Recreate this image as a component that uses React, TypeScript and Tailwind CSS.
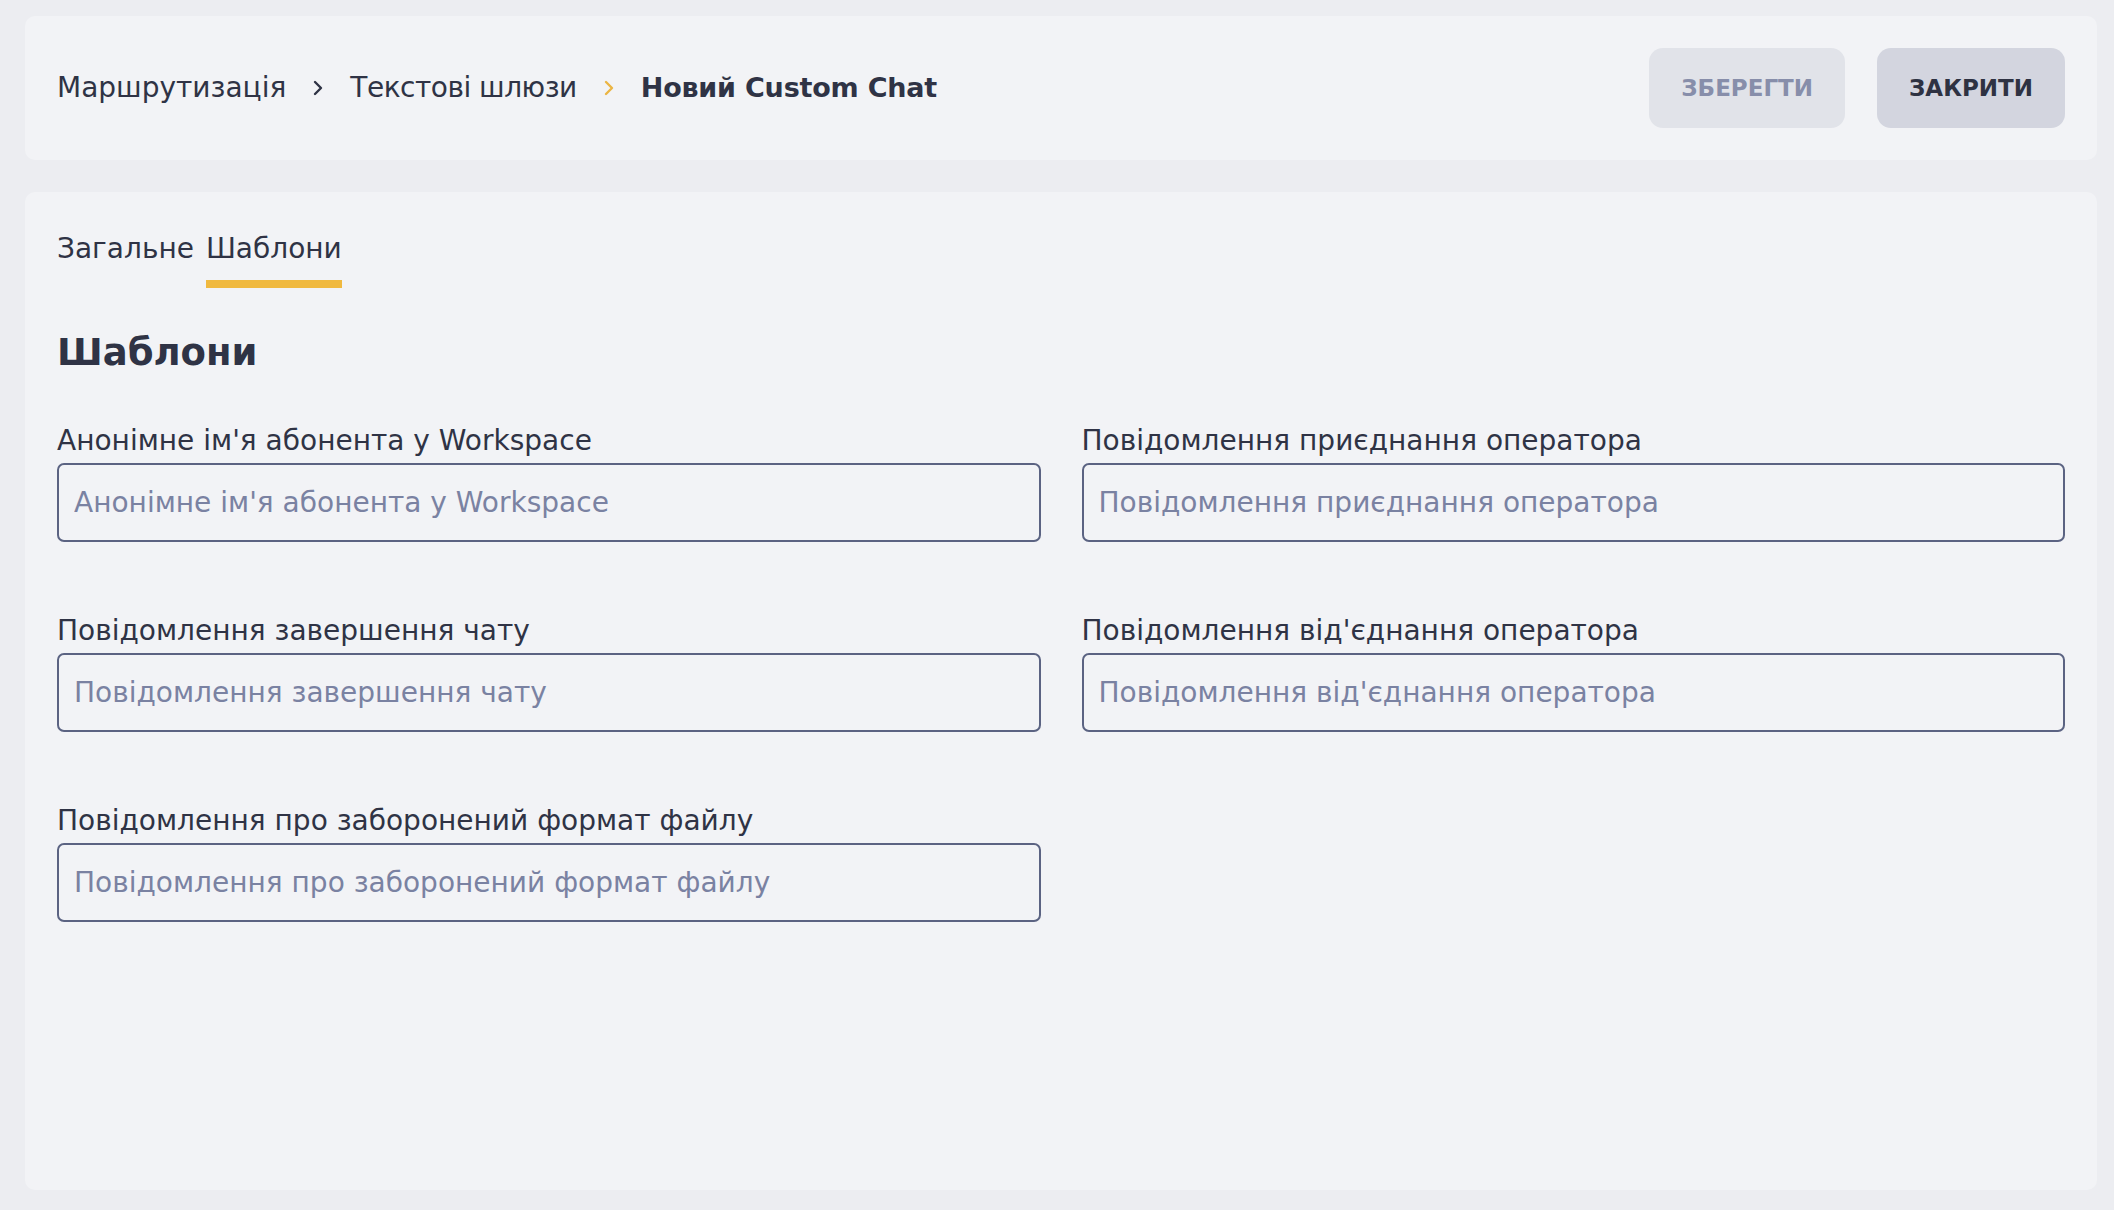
import { ReactNode } from "react";

const font = { fontFamily: '"DejaVu Sans", "Noto Sans", sans-serif' };

function Chevron({ className }: { className: string }) {
  return (
    <svg width="10" height="16" viewBox="0 0 10 16" fill="none" className={className}>
      <polyline points="2,2 8,8 2,14" stroke="currentColor" strokeWidth="2.4" strokeLinecap="round" strokeLinejoin="round" />
    </svg>
  );
}

function Field({ label }: { label: string }) {
  return (
    <div className="flex flex-col">
      <label className="text-[28px] leading-[34px] text-[#2f3345]">{label}</label>
      <input
        placeholder={label}
        className="mt-[5px] h-[79px] w-full rounded-[7px] border-2 border-[#5b6382] bg-transparent px-[15px] text-[28px] text-[#2f3345] outline-none placeholder:text-[#7a82a2]"
      />
    </div>
  );
}

function Tab({ active, children }: { active?: boolean; children: ReactNode }) {
  return (
    <div className="flex flex-col px-[3px]">
      <span className="text-[28px] leading-[40px] text-[#2f3345]">{children}</span>
      <span className={active ? "mt-[11px] h-2 bg-[#f0b93f]" : "mt-[11px] h-2"} />
    </div>
  );
}

export default function App() {
  return (
    <div style={font} className="flex h-screen flex-col gap-8 bg-[#ecedf1] pb-5 pl-[25px] pr-[17px] pt-4">
      {/* Header */}
      <header className="flex h-[144px] shrink-0 items-center justify-between rounded-[10px] bg-[#f2f3f6] px-8">
        <nav className="flex items-center gap-[27px] text-[28px] text-[#2f3345]">
          <span>Маршрутизація</span>
          <Chevron className="text-[#2f3345]" />
          <span className="tracking-[-0.5px]">Текстові шлюзи</span>
          <Chevron className="text-[#ebb544]" />
          <span className="text-[27px] font-bold tracking-[-0.2px]">Новий Custom Chat</span>
        </nav>
        <div className="flex items-center gap-8">
          <button className="h-[80px] rounded-[14px] bg-[#e1e3e9] px-8 text-[23px] font-bold text-[#878eaa]">
            ЗБЕРЕГТИ
          </button>
          <button className="h-[80px] rounded-[14px] bg-[#d3d5df] px-8 text-[23px] font-bold text-[#2e3242]">
            ЗАКРИТИ
          </button>
        </div>
      </header>

      {/* Main */}
      <main className="flex-1 rounded-[10px] bg-[#f2f3f6] px-8 pt-[37px]">
        <div className="-ml-[3px] flex gap-[6px]">
          <Tab>Загальне</Tab>
          <Tab active>Шаблони</Tab>
        </div>

        <h1 className="mt-[41px] text-[37px] font-bold leading-[48px] text-[#2f3345]">Шаблони</h1>

        <div className="mt-[47px] grid grid-cols-2 gap-x-[41px] gap-y-[72px]">
          <Field label="Анонімне ім'я абонента у Workspace" />
          <Field label="Повідомлення приєднання оператора" />
          <Field label="Повідомлення завершення чату" />
          <Field label="Повідомлення від'єднання оператора" />
          <Field label="Повідомлення про заборонений формат файлу" />
        </div>
      </main>
    </div>
  );
}
